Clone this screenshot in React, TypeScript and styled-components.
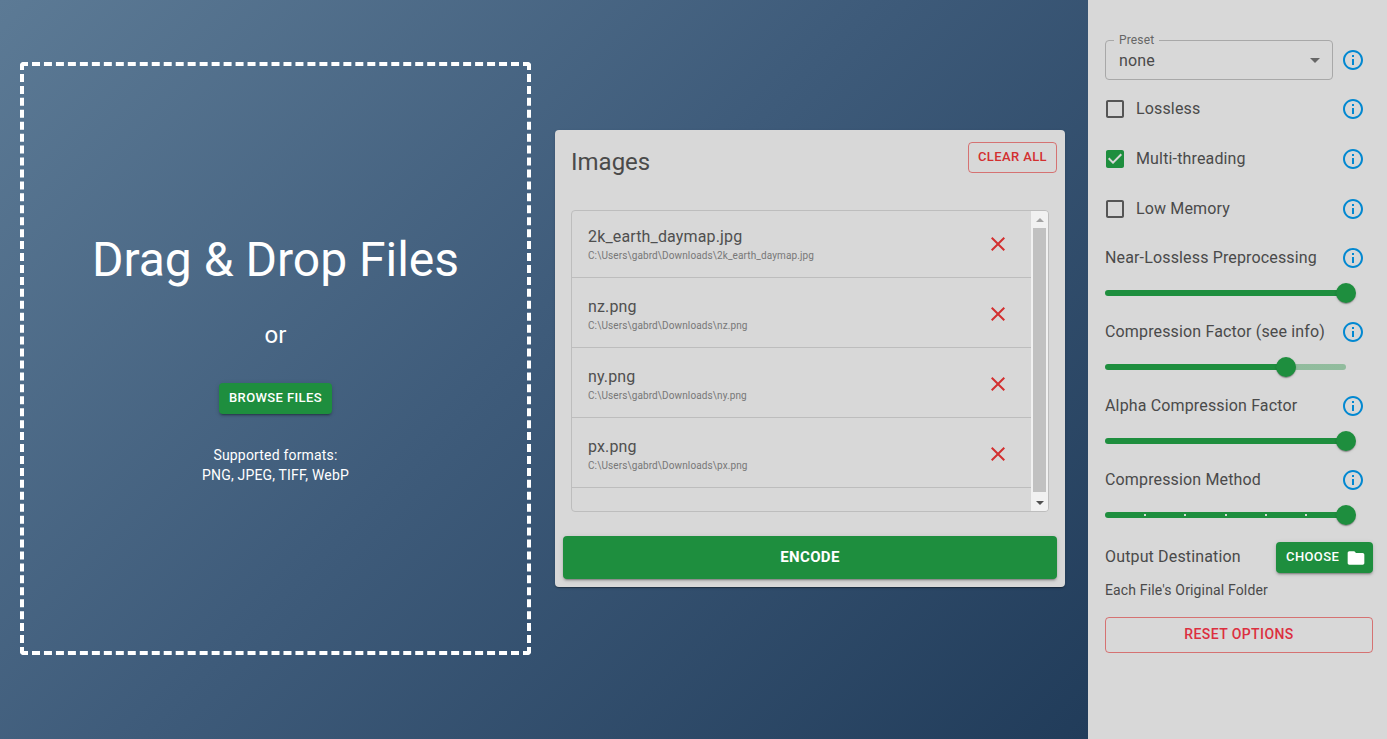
import React from "react";
import styled, { createGlobalStyle } from "styled-components";

const Global = createGlobalStyle`
  html, body { margin: 0; padding: 0; height: 100%; overflow: hidden; }
  body { font-family: Roboto, "Liberation Sans", sans-serif; background: #d8d8d8; }
  * { box-sizing: border-box; }
`;

const GREEN = "#1e8e3e";
const RED = "#d32f2f";

const Page = styled.div`
  display: flex;
  width: 1387px;
  height: 739px;
`;
const Main = styled.main`
  width: 1088px;
  height: 739px;
  display: flex;
  align-items: center;
  gap: 24px;
  padding: 0 0 22px 20px;
  background: linear-gradient(135deg, #5c7a95 0%, #3e5b7a 48%, #213c5a 100%);
`;
const DropZone = styled.section`
  width: 511px;
  height: 593px;
  border: 4px dashed #fff;
  border-radius: 4px;
  display: flex;
  flex-direction: column;
  align-items: center;
  justify-content: center;
  padding-bottom: 9px;
  color: #fff;
`;
const DropTitle = styled.h1`
  margin: 1px 0 0;
  font-size: 48px;
  line-height: 72px;
  font-weight: 400;
`;
const Or = styled.div`
  margin-top: 23px;
  font-size: 24px;
  line-height: 32px;
`;
const ContainedButton = styled.button<{ $mt?: number }>`
  display: inline-flex;
  align-items: center;
  justify-content: center;
  height: 31px;
  margin-top: ${(p) => p.$mt ?? 0}px;
  padding: 0 10px 2px;
  border: 0;
  border-radius: 4px;
  background: ${GREEN};
  color: #fff;
  font: 500 13px/22px Roboto, sans-serif;
  letter-spacing: 0.03em;
  text-transform: uppercase;
  box-shadow: 0 3px 1px -2px rgba(0,0,0,.2), 0 2px 2px 0 rgba(0,0,0,.14), 0 1px 5px 0 rgba(0,0,0,.12);
`;
const Formats = styled.div`
  margin-top: 31px;
  font-size: 14px;
  line-height: 20px;
  letter-spacing: 0.18px;
  text-align: center;
`;

const Panel = styled.section`
  width: 510px;
  height: 457px;
  padding: 8px;
  background: #d8d8d8;
  border-radius: 4px;
  box-shadow: 0 2px 1px -1px rgba(0,0,0,.2), 0 1px 1px 0 rgba(0,0,0,.14), 0 1px 3px 0 rgba(0,0,0,.12);
`;
const PanelHead = styled.header`
  display: flex;
  justify-content: space-between;
  align-items: flex-start;
  height: 72px;
  padding-left: 8px;
`;
const PanelTitle = styled.h2`
  margin: 8px 0 0;
  font-size: 24px;
  line-height: 32px;
  font-weight: 400;
  color: #4a4a4a;
`;
const OutlinedButton = styled.button<{ $full?: boolean }>`
  height: ${(p) => (p.$full ? 36 : 31)}px;
  width: ${(p) => (p.$full ? "100%" : "auto")};
  margin-top: ${(p) => (p.$full ? 0 : 4)}px;
  padding: 0 9px 2px;
  background: transparent;
  border: 1px solid rgba(211, 47, 47, 0.6);
  border-radius: 4px;
  color: ${(p) => (p.$full ? "#dc2f3f" : RED)};
  font: 500 ${(p) => (p.$full ? 14 : 13)}px/22px Roboto, sans-serif;
  letter-spacing: 0.03em;
  text-transform: uppercase;
`;
const ListBox = styled.div`
  display: flex;
  height: 302px;
  margin: 0 8px;
  border: 1px solid #bdbdbd;
  border-radius: 4px;
  overflow: hidden;
`;
const Items = styled.ul`
  flex: 1;
  min-width: 0;
  margin: -3px 0 0;
  padding: 0;
  list-style: none;
`;
const Item = styled.li`
  display: flex;
  align-items: center;
  justify-content: space-between;
  height: 70px;
  padding: 0 21px 0 16px;
  border-bottom: 1px solid #bdbdbd;
`;
const ItemName = styled.div`
  font-size: 16px;
  line-height: 24px;
  letter-spacing: 0.00938em;
  color: #4f4f4f;
`;
const ItemPath = styled.div`
  font-size: 10px;
  line-height: 14px;
  letter-spacing: 0.115px;
  color: #777;
`;
const ItemText = styled.div`
  margin-top: 3px;
`;
const CloseIcon = styled.div`
  margin-top: 2px;
`;
const ScrollTrack = styled.div`
  flex: 0 0 17px;
  display: flex;
  flex-direction: column;
  background: #f1f1f1;
`;
const ScrollEnd = styled.div`
  flex: 0 0 17px;
  display: flex;
  align-items: center;
  justify-content: center;
`;
const BottomEnd = styled(ScrollEnd)`
  margin-top: auto;
`;
const ArrowUp = styled.div`
  width: 0;
  height: 0;
  border-left: 4px solid transparent;
  border-right: 4px solid transparent;
  border-bottom: 4px solid #a3a3a3;
`;
const ArrowDown = styled.div`
  width: 0;
  height: 0;
  border-left: 4px solid transparent;
  border-right: 4px solid transparent;
  border-top: 4px solid #505050;
`;
const ScrollThumb = styled.div`
  flex: 0 0 264px;
  margin: 0 2px;
  background: #c1c1c1;
`;
const EncodeButton = styled.button`
  display: block;
  width: 100%;
  height: 43px;
  margin-top: 24px;
  padding: 0 0 2px;
  border: 0;
  border-radius: 4px;
  background: ${GREEN};
  color: #fff;
  font: 700 15px/26px Roboto, sans-serif;
  letter-spacing: 0.025em;
  text-transform: uppercase;
  box-shadow: 0 3px 1px -2px rgba(0,0,0,.2), 0 2px 2px 0 rgba(0,0,0,.14), 0 1px 5px 0 rgba(0,0,0,.12);
`;

const Side = styled.aside`
  width: 299px;
  height: 739px;
  padding: 40px 14px 0 17px;
  background: #d8d8d8;
  color: #4a4a4a;
  font-size: 16px;
  letter-spacing: 0.00938em;
`;
const Row = styled.div<{ $h: number; $mb?: number }>`
  display: flex;
  align-items: center;
  justify-content: space-between;
  height: ${(p) => p.$h}px;
  margin-bottom: ${(p) => p.$mb ?? 0}px;
  padding-right: 8px;
`;
const SelectBox = styled.div`
  position: relative;
  display: flex;
  align-items: center;
  justify-content: space-between;
  width: 228px;
  height: 40px;
  padding: 0 5px 0 13px;
  border: 1px solid #a8a8a8;
  border-radius: 4px;
`;
const SelectLabel = styled.span`
  position: absolute;
  left: 8px;
  top: -7px;
  padding: 0 5px;
  background: #d8d8d8;
  font-size: 12px;
  line-height: 12px;
  color: #666;
`;
const Check = styled.label`
  display: flex;
  align-items: center;
  gap: 9px;
  margin-left: -2px;
`;
const Svg = styled.svg<{ $c: string; $s?: number }>`
  display: block;
  flex: none;
  width: ${(p) => p.$s ?? 24}px;
  height: ${(p) => p.$s ?? 24}px;
  fill: ${(p) => p.$c};
`;
const Nudge = styled.span`
  display: block;
  margin-top: 2px;
`;
const SliderRow = styled.div`
  display: flex;
  align-items: center;
  width: 241px;
  height: 24px;
  margin-bottom: 2px;
`;
const Track = styled.div<{ $value: number }>`
  position: relative;
  width: 100%;
  height: 6px;
  border-radius: 3px;
  background: ${(p) =>
    `linear-gradient(to right, ${GREEN} ${p.$value}%, rgba(30,142,62,.38) ${p.$value}%)`};
`;
const Thumb = styled.span<{ $value: number }>`
  position: absolute;
  left: ${(p) => p.$value}%;
  top: 50%;
  width: 20px;
  height: 20px;
  border-radius: 50%;
  background: ${GREEN};
  transform: translate(-50%, -50%);
  box-shadow: 0 2px 1px -1px rgba(0,0,0,.2), 0 1px 1px 0 rgba(0,0,0,.14), 0 1px 3px 0 rgba(0,0,0,.12);
`;
const Mark = styled.span<{ $value: number }>`
  position: absolute;
  left: ${(p) => p.$value}%;
  top: 2px;
  width: 2px;
  height: 2px;
  margin-left: -1px;
  background: #d8d8d8;
`;
const OutputRow = styled.div`
  display: flex;
  align-items: flex-start;
  justify-content: space-between;
  height: 51px;
  padding-top: 13px;
  line-height: 29px;
`;
const ChooseButton = styled(ContainedButton)`
  gap: 7px;
  width: 97px;
  justify-content: flex-start;
  padding-bottom: 0;
`;
const ChooseText = styled.span`
  margin-bottom: 2px;
`;
const Small = styled.div`
  font-size: 14px;
  line-height: 20px;
  height: 37px;
`;

const INFO = "M11 7h2v2h-2zm0 4h2v6h-2zm1-9C6.48 2 2 6.48 2 12s4.48 10 10 10 10-4.48 10-10S17.52 2 12 2zm0 18c-4.41 0-8-3.59-8-8s3.59-8 8-8 8 3.59 8 8-3.59 8-8 8z";
const BOX = "M19 5v14H5V5h14m0-2H5c-1.1 0-2 .9-2 2v14c0 1.1.9 2 2 2h14c1.1 0 2-.9 2-2V5c0-1.1-.9-2-2-2z";
const CHECKED = "M19 3H5c-1.11 0-2 .9-2 2v14c0 1.1.89 2 2 2h14c1.11 0 2-.9 2-2V5c0-1.1-.89-2-2-2zm-9 14l-5-5 1.41-1.41L10 14.17l7.59-7.59L19 8l-9 9z";
const CLOSE = "M19 6.41L17.59 5 12 10.59 6.41 5 5 6.41 10.59 12 5 17.59 6.41 19 12 13.41 17.59 19 19 17.59 13.41 12z";
const FOLDER = "M10 4H4c-1.1 0-1.99.9-1.99 2L2 18c0 1.1.9 2 2 2h16c1.1 0 2-.9 2-2V8c0-1.1-.9-2-2-2h-8l-2-2z";
const CARET = "M7 10l5 5 5-5z";

const Icon = ({ d, c, s }: { d: string; c: string; s?: number }) => (
  <Svg viewBox="0 0 24 24" $c={c} $s={s}><path d={d} /></Svg>
);
const Info = () => <Icon d={INFO} c="#0288d1" />;

const files = [
  ["2k_earth_daymap.jpg", "C:\\Users\\gabrd\\Downloads\\2k_earth_daymap.jpg"],
  ["nz.png", "C:\\Users\\gabrd\\Downloads\\nz.png"],
  ["ny.png", "C:\\Users\\gabrd\\Downloads\\ny.png"],
  ["px.png", "C:\\Users\\gabrd\\Downloads\\px.png"],
];

const checks: [string, boolean][] = [
  ["Lossless", false],
  ["Multi-threading", true],
  ["Low Memory", false],
];

const sliders: { label: string; value: number; marks?: number[] }[] = [
  { label: "Near-Lossless Preprocessing", value: 100 },
  { label: "Compression Factor (see info)", value: 75 },
  { label: "Alpha Compression Factor", value: 100 },
  { label: "Compression Method", value: 100, marks: [16.67, 33.33, 50, 66.67, 83.33] },
];

export default function App() {
  return (
    <Page>
      <Global />
      <Main>
        <DropZone>
          <DropTitle>Drag &amp; Drop Files</DropTitle>
          <Or>or</Or>
          <ContainedButton $mt={32}>Browse Files</ContainedButton>
          <Formats>
            Supported formats:
            <br />
            PNG, JPEG, TIFF, WebP
          </Formats>
        </DropZone>
        <Panel>
          <PanelHead>
            <PanelTitle>Images</PanelTitle>
            <OutlinedButton>Clear All</OutlinedButton>
          </PanelHead>
          <ListBox>
            <Items>
              {files.map(([name, path]) => (
                <Item key={name}>
                  <ItemText>
                    <ItemName>{name}</ItemName>
                    <ItemPath>{path}</ItemPath>
                  </ItemText>
                  <CloseIcon><Icon d={CLOSE} c={RED} /></CloseIcon>
                </Item>
              ))}
            </Items>
            <ScrollTrack>
              <ScrollEnd><ArrowUp /></ScrollEnd>
              <ScrollThumb />
              <BottomEnd><ArrowDown /></BottomEnd>
            </ScrollTrack>
          </ListBox>
          <EncodeButton>Encode</EncodeButton>
        </Panel>
      </Main>
      <Side>
        <Row $h={40} $mb={3}>
          <SelectBox>
            <SelectLabel>Preset</SelectLabel>
            none
            <Icon d={CARET} c="#666" />
          </SelectBox>
          <Info />
        </Row>
        {checks.map(([label, on]) => (
          <Row $h={50} key={label}>
            <Check>
              <Nudge><Icon d={on ? CHECKED : BOX} c={on ? GREEN : "#555"} /></Nudge>
              {label}
            </Check>
            <Nudge><Info /></Nudge>
          </Row>
        ))}
        {sliders.map((s) => (
          <div key={s.label}>
            <Row $h={48}>
              {s.label}
              <Nudge><Info /></Nudge>
            </Row>
            <SliderRow>
              <Track $value={s.value}>
                {s.marks?.map((m) => <Mark key={m} $value={m} />)}
                <Thumb $value={s.value} />
              </Track>
            </SliderRow>
          </div>
        ))}
        <OutputRow>
          Output Destination
          <ChooseButton>
            <ChooseText>Choose</ChooseText>
            <Icon d={FOLDER} c="#fff" s={20} />
          </ChooseButton>
        </OutputRow>
        <Small>Each File's Original Folder</Small>
        <OutlinedButton $full>Reset Options</OutlinedButton>
      </Side>
    </Page>
  );
}
